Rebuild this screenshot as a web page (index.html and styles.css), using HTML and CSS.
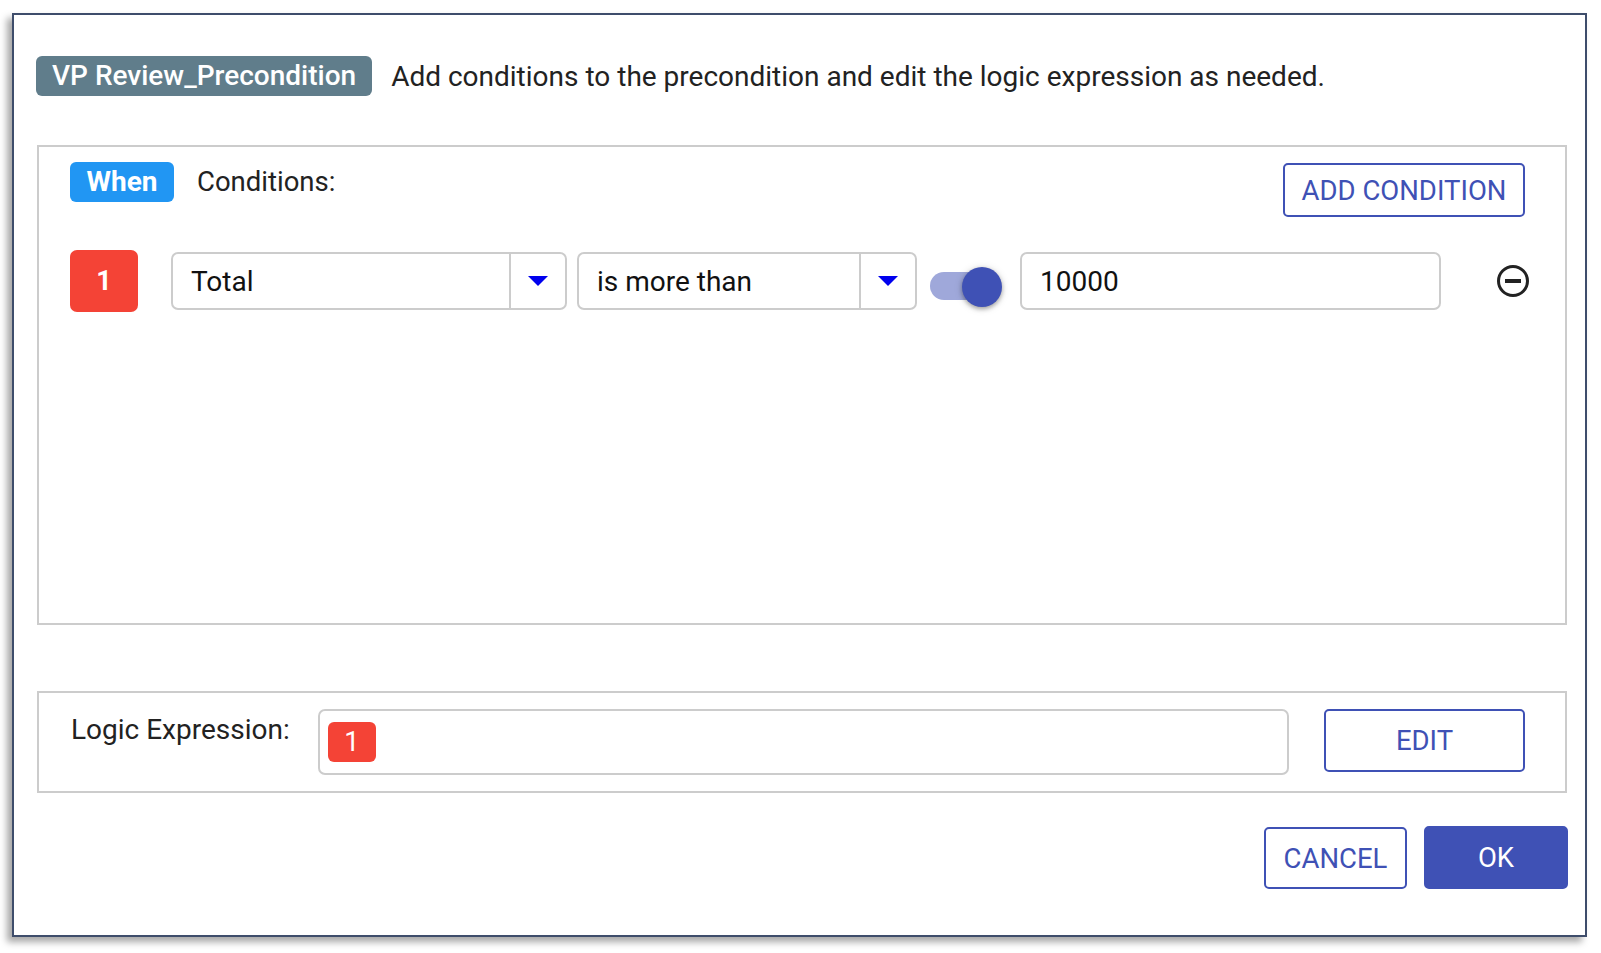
FILE: index.html
```html
<!DOCTYPE html>
<html>
<head>
<meta charset="utf-8">
<link rel="stylesheet" href="styles.css">
</head>
<body>
<div class="dialog">
  <div class="header">
    <span class="title-badge">VP Review_Precondition</span>
    <span class="desc">Add conditions to the precondition and edit the logic expression as needed.</span>
  </div>
  <div class="cond-box">
    <div class="cond-head">
      <span class="when">When</span>
      <span class="cond-label">Conditions:</span>
      <button class="btn btn-outline add-btn">ADD CONDITION</button>
    </div>
    <div class="cond-row">
      <span class="num">1</span>
      <div class="select sel-field">
        <span class="sel-text">Total</span>
        <span class="sel-arrow"><span class="tri"></span></span>
      </div>
      <div class="select sel-op">
        <span class="sel-text">is more than</span>
        <span class="sel-arrow"><span class="tri"></span></span>
      </div>
      <div class="toggle">
        <span class="track"></span>
        <span class="thumb"></span>
      </div>
      <div class="value-input">10000</div>
      <svg class="remove" width="34" height="34" viewBox="0 0 34 34">
        <circle cx="17" cy="17" r="14.5" fill="none" stroke="#222" stroke-width="3"/>
        <rect x="9" y="15" width="16" height="4" fill="#222"/>
      </svg>
    </div>
  </div>
  <div class="logic-box">
    <span class="logic-label">Logic Expression:</span>
    <div class="logic-field"><span class="logic-num">1</span></div>
    <button class="btn btn-outline edit-btn">EDIT</button>
  </div>
  <div class="footer">
    <button class="btn btn-outline cancel-btn">CANCEL</button>
    <button class="btn btn-primary ok-btn">OK</button>
  </div>
</div>
</body>
</html>
```

FILE: styles.css
```css
* { box-sizing: border-box; }
html, body { margin: 0; padding: 0; background: #fff; }
body {
  font-family: Roboto, "Liberation Sans", sans-serif;
  color: #222;
  width: 1601px;
  height: 953px;
  overflow: hidden;
}
.dialog {
  margin: 13px 0 0 12px;
  width: 1575px;
  height: 924px;
  border: 2px solid #3e4d6b;
  background: #fff;
  box-shadow: -5px 5px 7px rgba(0,0,0,0.35);
  padding: 41px 18px 0 23px;
  display: flex;
  flex-direction: column;
}
.header {
  display: flex;
  align-items: center;
  height: 40px;
}
.title-badge {
  background: #607d8b;
  color: #fff;
  font-weight: 500;
  font-size: 28px;
  height: 40px;
  line-height: 40px;
  padding: 0 16px;
  border-radius: 6px;
  margin-left: -1px;
}
.desc {
  margin-left: 19px;
  font-size: 28px;
  color: #222;
}
.cond-box {
  margin-top: 49px;
  height: 480px;
  border: 2px solid #cccccc;
  padding: 15px 40px 0 31px;
}
.cond-head {
  display: flex;
  align-items: flex-start;
}
.when {
  background: #2196f3;
  color: #fff;
  font-weight: 700;
  font-size: 28px;
  height: 40px;
  line-height: 40px;
  width: 104px;
  text-align: center;
  border-radius: 6px;
}
.cond-label {
  margin-left: 23px;
  font-size: 27.5px;
  line-height: 40px;
  color: #222;
}
.btn {
  font-family: Roboto, "Liberation Sans", sans-serif;
  font-size: 27.5px;
  border-radius: 5px;
  background: #fff;
  cursor: pointer;
  padding: 0;
}
.btn-outline {
  border: 2px solid #3f51b5;
  color: #3f51b5;
}
.btn-primary {
  border: 2px solid #3f51b5;
  background: #3f51b5;
  color: #fff;
}
.add-btn {
  margin-left: auto;
  margin-top: 1px;
  width: 242px;
  height: 54px;
}
.cond-row {
  display: flex;
  align-items: center;
  margin-top: 33px;
}
.num {
  width: 68px;
  height: 62px;
  background: #f44336;
  color: #fff;
  border-radius: 7px;
  font-weight: 700;
  font-size: 27px;
  display: flex;
  align-items: center;
  justify-content: center;
}
.select {
  display: flex;
  height: 58px;
  border: 2px solid #cccccc;
  border-radius: 7px;
  font-size: 28px;
  color: #111;
}
.sel-field { width: 396px; margin-left: 33px; }
.sel-op { width: 340px; margin-left: 10px; }
.sel-text {
  flex: 1;
  padding-left: 18px;
  display: flex;
  align-items: center;
}
.sel-arrow {
  width: 56px;
  border-left: 2px solid #cccccc;
  display: flex;
  align-items: center;
  justify-content: center;
}
.tri {
  width: 0;
  height: 0;
  border-left: 10px solid transparent;
  border-right: 10px solid transparent;
  border-top: 10px solid #0000ee;
}
.toggle {
  position: relative;
  width: 103px;
  height: 58px;
}
.track {
  position: absolute;
  left: 13px;
  top: 20px;
  width: 62px;
  height: 28px;
  border-radius: 14px;
  background: #9fa8da;
}
.thumb {
  position: absolute;
  left: 45px;
  top: 15px;
  width: 40px;
  height: 40px;
  border-radius: 50%;
  background: #3f51b5;
  box-shadow: 0 2px 4px rgba(0,0,0,0.3), 0 1px 8px rgba(0,0,0,0.15);
}
.value-input {
  width: 421px;
  height: 58px;
  border: 2px solid #cccccc;
  border-radius: 7px;
  font-size: 28px;
  color: #111;
  padding-left: 18px;
  display: flex;
  align-items: center;
}
.remove {
  margin-left: auto;
  margin-right: -5px;
}
.logic-box {
  margin-top: 66px;
  height: 102px;
  border: 2px solid #cccccc;
  padding: 16px 40px 0 32px;
  display: flex;
  align-items: flex-start;
}
.logic-label {
  font-size: 28px;
  color: #222;
  margin-top: 4px;
}
.logic-field {
  margin-left: 28px;
  width: 971px;
  height: 66px;
  border: 2px solid #cccccc;
  border-radius: 7px;
  padding: 11px 0 0 8px;
}
.logic-num {
  display: flex;
  align-items: center;
  justify-content: center;
  width: 48px;
  height: 40px;
  background: #f44336;
  color: #fff;
  border-radius: 6px;
  font-size: 27px;
}
.edit-btn {
  margin-left: auto;
  width: 201px;
  height: 63px;
}
.footer {
  display: flex;
  justify-content: flex-end;
  margin-top: 34px;
  margin-right: -1px;
}
.cancel-btn {
  width: 143px;
  height: 62px;
}
.ok-btn {
  margin-left: 17px;
  width: 144px;
  height: 63px;
  margin-top: -1px;
}
```
